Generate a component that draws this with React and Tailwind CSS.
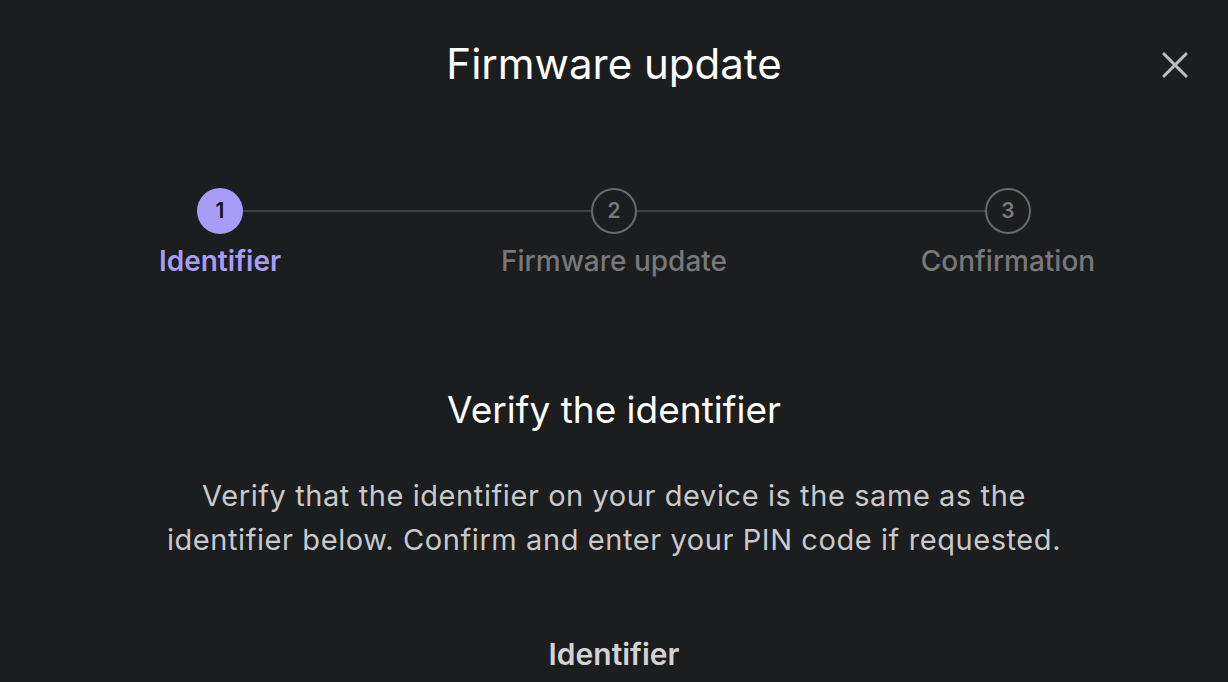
import { X } from 'lucide-react';

const steps = [
    { n: 1, label: 'Identifier' },
    { n: 2, label: 'Firmware update' },
    { n: 3, label: 'Confirmation' },
];

function Stepper({ active = 0 }) {
    return (
        <div className="grid grid-cols-3 w-[1182px] mx-auto">
            {steps.map((s, i) => (
                <div key={s.n} className="relative flex flex-col items-center">
                    {i > 0 && (
                        <div className="absolute top-[22px] right-1/2 w-full h-[2px] bg-[#3f4043]" />
                    )}
                    <div
                        className={`relative z-10 w-[46px] h-[46px] rounded-full flex items-center justify-center text-[21px] font-semibold ${
                            i === active
                                ? 'bg-[#a99cf6] text-[#131314]'
                                : 'bg-[#1c1d1f] border-2 border-[#6a6a6c] text-[#7a7a7c]'
                        }`}
                    >
                        {s.n}
                    </div>
                    <div
                        className={`mt-[10px] text-[28px] leading-[34px] ${
                            i === active ? 'text-[#a99cf6] font-semibold' : 'text-[#78787a] font-medium'
                        }`}
                    >
                        {s.label}
                    </div>
                </div>
            ))}
        </div>
    );
}

export default function App() {
    return (
        <div className="w-[1228px] h-[682px] overflow-hidden bg-[#1c1d1f] text-white font-['Inter',sans-serif]">
            <header className="relative h-[130px] flex items-start justify-center pt-[38px]">
                <h1 className="text-[42px] leading-[52px] font-normal text-white">Firmware update</h1>
                <button className="absolute right-[31px] top-[43px] text-[#bdbdbe]">
                    <X size={44} strokeWidth={1.7} />
                </button>
            </header>

            <div className="pt-[58px]">
                <Stepper active={0} />
            </div>

            <section className="flex flex-col items-center text-center mt-[108px]">
                <h2 className="text-[37px] leading-[48px] font-normal text-white">Verify the identifier</h2>
                <p className="mt-[40px] text-[29px] leading-[44px] tracking-[0.02em] text-[#c9c9ca] w-[910px]">
                    Verify that the identifier on your device is the same as the identifier below. Confirm and enter your PIN code if requested.
                </p>
                <div className="mt-[74px] text-[30px] leading-[36px] font-semibold text-[#d2d2d3]">Identifier</div>
            </section>
        </div>
    );
}
